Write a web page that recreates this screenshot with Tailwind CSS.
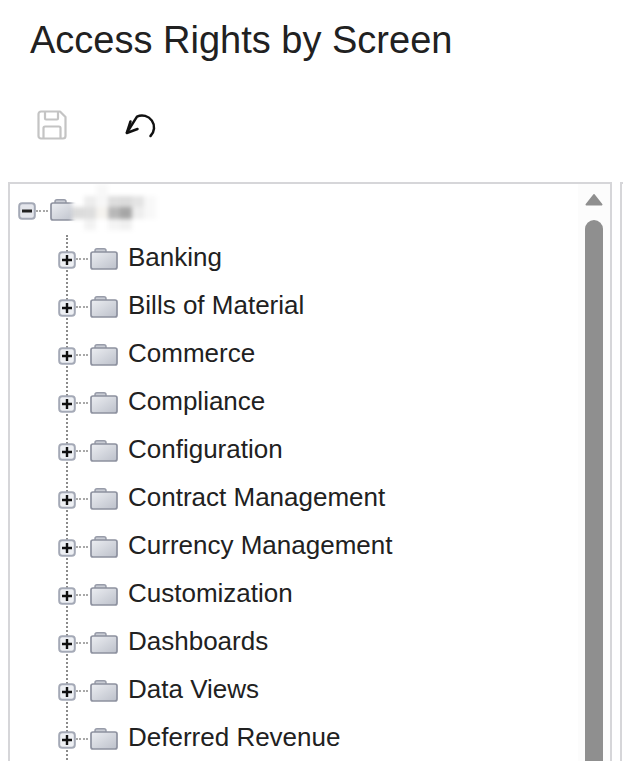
<!DOCTYPE html>
<html lang="en">
<head>
  <meta charset="UTF-8" />
  <title>Access Rights by Screen</title>
  <script src="https://cdn.jsdelivr.net/npm/@tailwindcss/browser@4"></script>
</head>
<body class="bg-white overflow-hidden h-[761px] font-['Liberation_Sans',Arial,sans-serif] text-[#212121]">

  <!-- shared tree icons -->
  <svg class="absolute w-0 h-0">
    <defs>
      <linearGradient id="folderFill" x1="0" y1="0" x2="1" y2="1">
        <stop offset="0" stop-color="#eceef2"/>
        <stop offset="1" stop-color="#bcc0ca"/>
      </linearGradient>
      <symbol id="folder" viewBox="0 0 28 22">
        <path d="M5 6V2.800Q5 0.800 7 0.800H14Q16 0.800 16 2.800V6Z" fill="#c9ccd4" stroke="#989ca9" stroke-width="1.500"/>
        <path d="M1 19V6Q1 4 3 4H25Q27 4 27 6V19Q27 21 25 21H3Q1 21 1 19Z" fill="url(#folderFill)" stroke="#8d919f" stroke-width="1.700"/>
      </symbol>
      <symbol id="plusBox" viewBox="0 0 18 18">
        <rect x="1.200" y="1.200" width="15.600" height="15.600" rx="3" fill="#eef0f4" stroke="#a4a9b6" stroke-width="2"/>
        <path d="M4 9H14M9 4V14" stroke="#111" stroke-width="2.400"/>
      </symbol>
    </defs>
  </svg>

  <h1 class="pl-[30px] pt-[18px] text-[38px] leading-[44px] font-normal">Access Rights by Screen</h1>

  <!-- toolbar -->
  <div class="flex items-center h-[48px] mt-[39px] pl-[36px] gap-[56px]">
    <svg width="32" height="32" viewBox="0 0 32 32" fill="none" stroke="#c4c4c4" stroke-width="2.200" stroke-linejoin="round">
      <path d="M5 2.500H24L29.500 8V27a2.500 2.500 0 0 1-2.500 2.500H5A2.500 2.500 0 0 1 2.500 27V5A2.500 2.500 0 0 1 5 2.500Z"/>
      <path d="M9 2.500V9.500a1 1 0 0 0 1 1H21a1 1 0 0 0 1-1V2.500"/>
      <path d="M7.500 29.500V19a1.500 1.500 0 0 1 1.500-1.500H23a1.500 1.500 0 0 1 1.500 1.500V29.500"/>
    </svg>
    <svg width="34" height="32" viewBox="0 0 34 32" fill="none" stroke="#111" stroke-width="2.500" stroke-linecap="round" stroke-linejoin="round">
      <path d="M3 23.500 13 7.600A12 12 0 0 1 26.500 27"/>
      <path d="M6.500 12.500 2.800 24 13.500 20"/>
    </svg>
  </div>

  <div class="flex mt-[33px] h-[600px]">
    <!-- tree panel -->
    <div class="relative ml-[8px] w-[604px] h-[600px] border-2 border-b-0 border-[#d6d6d9] overflow-hidden shrink-0">
      <!-- scrollbar -->
      <div class="absolute right-0 top-0 bottom-0 w-[32px] bg-[#fcfcfc]">
        <svg width="18" height="13" viewBox="0 0 18 13" class="ml-[7px] mt-[9px]"><path d="M9 2 16.500 11.500H1.500Z" fill="#8f8f8f" stroke="#8f8f8f" stroke-width="2" stroke-linejoin="round"/></svg>
        <div class="w-[18px] h-[560px] ml-[7px] mt-[14px] rounded-[9px] bg-[#8f8f8f]"></div>
      </div>

      <!-- root row -->
      <div class="flex items-center h-[20px] mt-[17px] ml-[8px]">
        <svg width="18" height="18" viewBox="0 0 18 18" class="shrink-0"><rect x="1.200" y="1.200" width="15.600" height="15.600" rx="3" fill="#e4e6ec" stroke="#a4a9b6" stroke-width="2"/><rect x="4" y="7.500" width="10" height="3" fill="#222"/></svg>
        <div class="w-[12px] border-t-2 border-dotted border-[#a8a8a8]"></div>
        <svg width="28" height="22" class="ml-[2px] -mt-[2px] shrink-0"><use href="#folder"/></svg>
      </div>

      <!-- blurred out root name -->
      <div class="absolute left-[62px] top-0 w-[84px] h-[46px] bg-white blur-[2px] grid grid-cols-7 grid-rows-4">
        <div></div><div></div><div class="bg-[#f8f8f8]"></div><div></div><div></div><div></div><div></div>
        <div></div><div class="bg-[#ededed]"></div><div class="bg-[#f7f7f7]"></div><div class="bg-[#dedede]"></div><div class="bg-[#dcdcdc]"></div><div class="bg-[#e4e4e4]"></div><div class="bg-[#f8f8f8]"></div>
        <div class="bg-[#dcdcdc]"></div><div class="bg-[#dedede]"></div><div class="bg-[#f5f3ef]"></div><div class="bg-[#b8b8b8]"></div><div class="bg-[#a6a6a6]"></div><div class="bg-[#eeeeee]"></div><div class="bg-[#f8f8f8]"></div>
        <div></div><div class="bg-[#f2f2f2]"></div><div></div><div class="bg-[#f4f4f4]"></div><div class="bg-[#f0f0f0]"></div><div></div><div></div>
      </div>

      <!-- children -->
      <ul class="mt-[14px] ml-[56px] border-l-2 border-dotted border-[#8a8a8a]">
        <li class="flex items-center h-[48px] pb-[1px]"><svg width="18" height="18" class="-ml-[10px] mt-[2px] shrink-0"><use href="#plusBox"/></svg><div class="w-[12px] border-t-2 border-dotted border-[#a8a8a8]"></div><svg width="28" height="22" class="ml-[2px] shrink-0"><use href="#folder"/></svg><span class="ml-[10px] text-[26px] leading-[30px] -mt-[4px]">Banking</span></li>
        <li class="flex items-center h-[48px] pb-[1px]"><svg width="18" height="18" class="-ml-[10px] mt-[2px] shrink-0"><use href="#plusBox"/></svg><div class="w-[12px] border-t-2 border-dotted border-[#a8a8a8]"></div><svg width="28" height="22" class="ml-[2px] shrink-0"><use href="#folder"/></svg><span class="ml-[10px] text-[26px] leading-[30px] -mt-[4px]">Bills of Material</span></li>
        <li class="flex items-center h-[48px] pb-[1px]"><svg width="18" height="18" class="-ml-[10px] mt-[2px] shrink-0"><use href="#plusBox"/></svg><div class="w-[12px] border-t-2 border-dotted border-[#a8a8a8]"></div><svg width="28" height="22" class="ml-[2px] shrink-0"><use href="#folder"/></svg><span class="ml-[10px] text-[26px] leading-[30px] -mt-[4px]">Commerce</span></li>
        <li class="flex items-center h-[48px] pb-[1px]"><svg width="18" height="18" class="-ml-[10px] mt-[2px] shrink-0"><use href="#plusBox"/></svg><div class="w-[12px] border-t-2 border-dotted border-[#a8a8a8]"></div><svg width="28" height="22" class="ml-[2px] shrink-0"><use href="#folder"/></svg><span class="ml-[10px] text-[26px] leading-[30px] -mt-[4px]">Compliance</span></li>
        <li class="flex items-center h-[48px] pb-[1px]"><svg width="18" height="18" class="-ml-[10px] mt-[2px] shrink-0"><use href="#plusBox"/></svg><div class="w-[12px] border-t-2 border-dotted border-[#a8a8a8]"></div><svg width="28" height="22" class="ml-[2px] shrink-0"><use href="#folder"/></svg><span class="ml-[10px] text-[26px] leading-[30px] -mt-[4px]">Configuration</span></li>
        <li class="flex items-center h-[48px] pb-[1px]"><svg width="18" height="18" class="-ml-[10px] mt-[2px] shrink-0"><use href="#plusBox"/></svg><div class="w-[12px] border-t-2 border-dotted border-[#a8a8a8]"></div><svg width="28" height="22" class="ml-[2px] shrink-0"><use href="#folder"/></svg><span class="ml-[10px] text-[26px] leading-[30px] -mt-[4px]">Contract Management</span></li>
        <li class="flex items-center h-[48px] pb-[1px]"><svg width="18" height="18" class="-ml-[10px] mt-[2px] shrink-0"><use href="#plusBox"/></svg><div class="w-[12px] border-t-2 border-dotted border-[#a8a8a8]"></div><svg width="28" height="22" class="ml-[2px] shrink-0"><use href="#folder"/></svg><span class="ml-[10px] text-[26px] leading-[30px] -mt-[4px]">Currency Management</span></li>
        <li class="flex items-center h-[48px] pb-[1px]"><svg width="18" height="18" class="-ml-[10px] mt-[2px] shrink-0"><use href="#plusBox"/></svg><div class="w-[12px] border-t-2 border-dotted border-[#a8a8a8]"></div><svg width="28" height="22" class="ml-[2px] shrink-0"><use href="#folder"/></svg><span class="ml-[10px] text-[26px] leading-[30px] -mt-[4px]">Customization</span></li>
        <li class="flex items-center h-[48px] pb-[1px]"><svg width="18" height="18" class="-ml-[10px] mt-[2px] shrink-0"><use href="#plusBox"/></svg><div class="w-[12px] border-t-2 border-dotted border-[#a8a8a8]"></div><svg width="28" height="22" class="ml-[2px] shrink-0"><use href="#folder"/></svg><span class="ml-[10px] text-[26px] leading-[30px] -mt-[4px]">Dashboards</span></li>
        <li class="flex items-center h-[48px] pb-[1px]"><svg width="18" height="18" class="-ml-[10px] mt-[2px] shrink-0"><use href="#plusBox"/></svg><div class="w-[12px] border-t-2 border-dotted border-[#a8a8a8]"></div><svg width="28" height="22" class="ml-[2px] shrink-0"><use href="#folder"/></svg><span class="ml-[10px] text-[26px] leading-[30px] -mt-[4px]">Data Views</span></li>
        <li class="flex items-center h-[48px] pb-[1px]"><svg width="18" height="18" class="-ml-[10px] mt-[2px] shrink-0"><use href="#plusBox"/></svg><div class="w-[12px] border-t-2 border-dotted border-[#a8a8a8]"></div><svg width="28" height="22" class="ml-[2px] shrink-0"><use href="#folder"/></svg><span class="ml-[10px] text-[26px] leading-[30px] -mt-[4px]">Deferred Revenue</span></li>
        <li class="h-[48px]"></li>
      </ul>
    </div>

    <!-- next panel, cut off at the window edge -->
    <div class="ml-[8px] flex-1 h-[600px] border-l-2 border-t-2 border-[#d6d6d9]"></div>
  </div>

</body>
</html>
